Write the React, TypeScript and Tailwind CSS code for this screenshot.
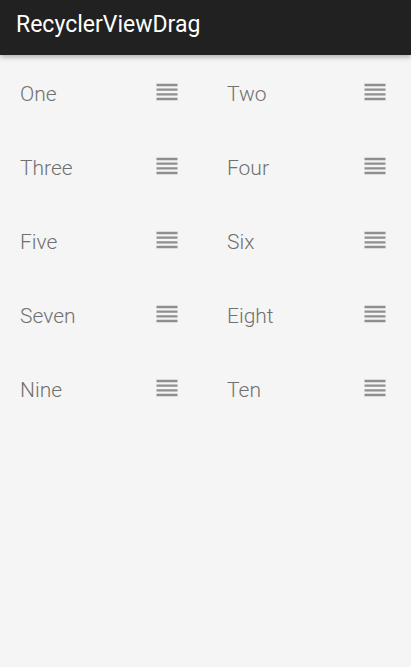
const ITEMS = ['One', 'Two', 'Three', 'Four', 'Five', 'Six', 'Seven', 'Eight', 'Nine', 'Ten'];

function ReorderIcon() {
  return (
    <svg width="28" height="28" viewBox="0 0 24 24" className="shrink-0 fill-[#8f8f8f]">
      <path d="M3 15h18v-2H3v2zm0 4h18v-2H3v2zm0-8h18V9H3v2zm0-6v2h18V5H3z" />
    </svg>
  );
}

export default function App() {
  return (
    <div className="flex h-[667px] w-[411px] flex-col bg-[#f5f5f5] font-['Roboto',sans-serif]">
      <div className="relative z-10 h-[55px] shrink-0 bg-[#212121] px-4 pt-[11px] shadow-[0_2px_5px_rgba(0,0,0,0.3)]">
        <span className="text-[23px] leading-[27px] font-normal text-white">RecyclerViewDrag</span>
      </div>
      <div className="grid grid-cols-[205px_206px]">
        {ITEMS.map((item, i) => (
          <div
            key={item}
            className={
              i % 2 === 0
                ? 'flex h-[74px] items-center justify-between pl-5 pr-6'
                : 'flex h-[74px] items-center justify-between pl-[22px] pr-[22px]'
            }
          >
            <span className="pt-[6px] text-[21px] font-light text-[#707070]">{item}</span>
            <ReorderIcon />
          </div>
        ))}
      </div>
    </div>
  );
}
